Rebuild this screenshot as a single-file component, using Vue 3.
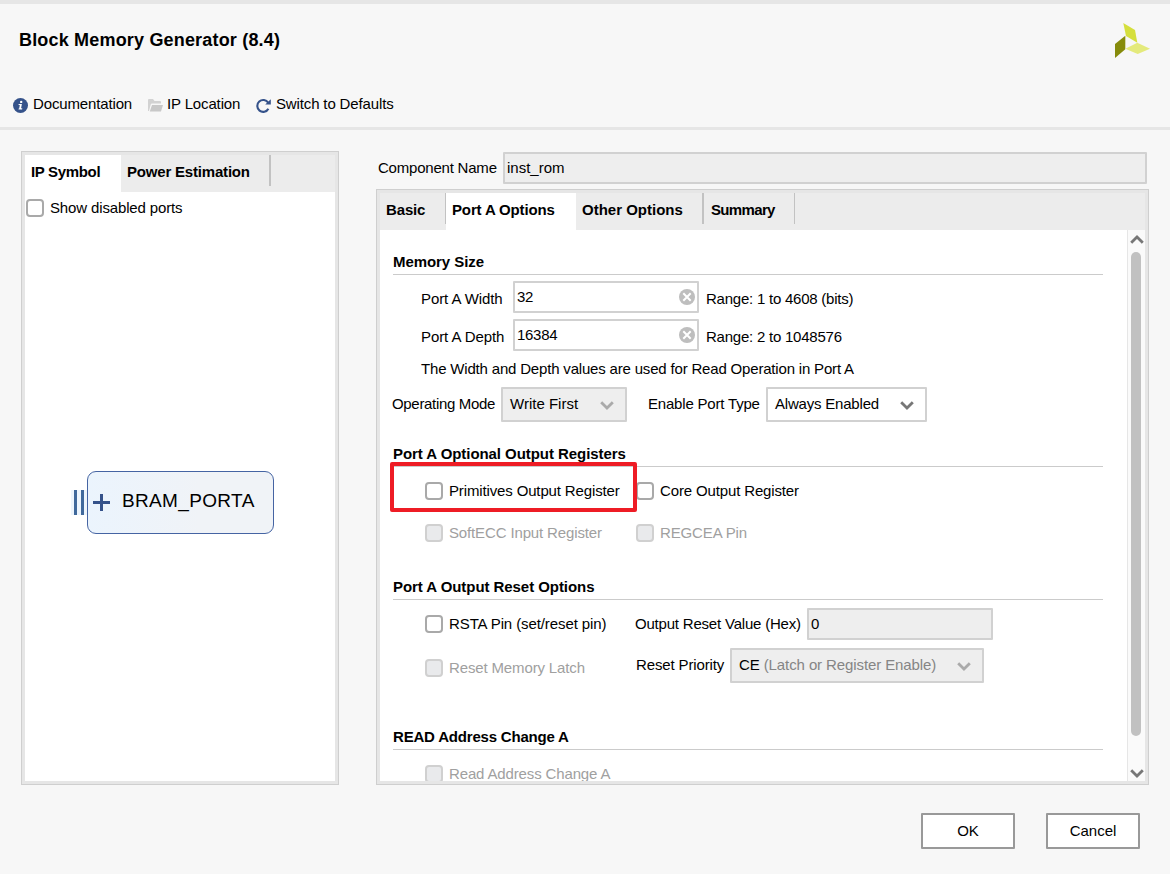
<template>
  <div class="dialog">
    <!-- Start of header -->
    <header class="header">
      <div class="title-row">
        <h1 class="title">Block Memory Generator (8.4)</h1>
        <svg class="logo" width="36" height="36" viewBox="0 0 36 36">
          <path d="M8.300 0 L20 7 L22.300 19.700 L11 13 Z" fill="#d5df3d" />
          <path d="M0 21 L10.300 12.700 L10.300 26.300 L0 35 Z" fill="#868b0b" />
          <path d="M10.300 25.700 L22.300 19.700 L35 25.700 L22.700 31 Z" fill="#e4ea7c" />
        </svg>
      </div>
      <nav class="toolbar">
        <a class="tool documentation">
          <svg width="15" height="15" viewBox="0 0 15 15">
            <circle cx="7.500" cy="7.500" r="7.500" fill="#35528a" />
            <circle cx="8.200" cy="3.900" r="1.200" fill="#fff" />
            <path d="M5.700 6 H8.900 L8.100 10.300 H9.300 L9.100 11.600 H5.500 L5.700 10.400 H6.200 L6.800 7.100 H5.500 Z" fill="#fff" />
          </svg>
          <span>Documentation</span>
        </a>
        <a class="tool location">
          <svg width="15" height="13" viewBox="0 0 15 13">
            <path d="M0 12 V1 Q0 0 1 0 H5 L6.500 2 H12 Q13 2 13 3 V4.500 H4 Q3 4.500 2.700 5.500 L1 12 Z" fill="#d2d2d2" />
            <path d="M4 6 H15 L13 12.500 H1.800 Z" fill="#c8c8c8" />
          </svg>
          <span>IP Location</span>
        </a>
        <a class="tool defaults">
          <svg width="15" height="15" viewBox="0 0 15 15">
            <path d="M12.200 4.800 A5.900 5.900 0 1 0 12.400 10.700" fill="none" stroke="#35528a" stroke-width="2.100" />
            <path d="M14.800 1.300 V6.600 H9.200 Z" fill="#35528a" />
          </svg>
          <span>Switch to Defaults</span>
        </a>
      </nav>
    </header>
    <!-- End of header -->

    <main class="main-content">
      <!-- Start of symbol panel -->
      <section class="panel symbol-panel">
        <div class="tabs">
          <button class="tab active tab-symbol">IP Symbol</button>
          <button class="tab tab-power">Power Estimation</button>
        </div>
        <div class="symbol-body">
          <label class="check show-ports">
            <input type="checkbox" v-model="showDisabled" />
            <span>Show disabled ports</span>
          </label>
          <div class="symbol">
            <span class="bus"></span>
            <div class="block">
              <svg width="17" height="17" viewBox="0 0 17 17">
                <path d="M0 8.500 H17 M8.500 0 V17" stroke="#35528a" stroke-width="3" />
              </svg>
              <span>BRAM_PORTA</span>
            </div>
          </div>
        </div>
      </section>
      <!-- End of symbol panel -->

      <!-- Start of options -->
      <section class="options">
        <div class="component-name">
          <label>Component Name</label>
          <input type="text" class="text-input disabled" v-model="componentName" readonly />
        </div>

        <div class="panel options-panel">
          <div class="tabs">
            <button v-for="tab in tabs" :key="tab.id" class="tab" :class="['tab-' + tab.id, { active: tab.id === activeTab }]"
              @click="activeTab = tab.id">{{ tab.label }}</button>
          </div>

          <div class="scroll-area">
            <div class="form">
              <!-- Memory size -->
              <h2 class="section-title first">Memory Size</h2>
              <div class="size-fields">
                <div v-for="field in sizeFields" :key="field.label" class="size-row">
                  <label class="size-label">{{ field.label }}</label>
                  <div class="clear-input">
                    <input type="text" v-model="field.value" />
                    <svg width="16" height="16" viewBox="0 0 16 16" @click="field.value = ''">
                      <circle cx="8" cy="8" r="8" fill="#bebebe" />
                      <path d="M4.300 4.300 L11.700 11.700 M11.700 4.300 L4.300 11.700" stroke="#fff" stroke-width="2" />
                    </svg>
                  </div>
                  <span class="range">{{ field.range }}</span>
                </div>
              </div>
              <p class="note">The Width and Depth values are used for Read Operation in Port A</p>
              <div class="mode-row">
                <label class="mode-label">Operating Mode</label>
                <div class="select mode-select disabled">
                  <span>Write First</span>
                  <svg class="chevron" width="14" height="9" viewBox="0 0 14 9"><path d="M1.200 1.200 L7 7 L12.800 1.200" /></svg>
                </div>
                <label class="enable-label">Enable Port Type</label>
                <div class="select enable-select">
                  <span>Always Enabled</span>
                  <svg class="chevron" width="14" height="9" viewBox="0 0 14 9"><path d="M1.200 1.200 L7 7 L12.800 1.200" /></svg>
                </div>
              </div>

              <!-- Output registers -->
              <h2 class="section-title registers-title">Port A Optional Output Registers</h2>
              <div class="registers">
                <label v-for="item in registers" :key="item.label" class="check" :class="{ disabled: item.disabled }">
                  <input type="checkbox" v-model="item.checked" :disabled="item.disabled" />
                  <span>{{ item.label }}</span>
                </label>
                <div class="highlight"></div>
              </div>

              <!-- Reset options -->
              <h2 class="section-title reset-title">Port A Output Reset Options</h2>
              <div class="reset-row">
                <label class="check reset-check">
                  <input type="checkbox" v-model="rstaPin" />
                  <span>RSTA Pin (set/reset pin)</span>
                </label>
                <label class="reset-label">Output Reset Value (Hex)</label>
                <input type="text" class="text-input disabled reset-value" v-model="resetValue" readonly />
              </div>
              <div class="reset-row priority-row">
                <label class="check reset-check disabled">
                  <input type="checkbox" disabled />
                  <span>Reset Memory Latch</span>
                </label>
                <label class="priority-label">Reset Priority</label>
                <div class="select priority-select disabled">
                  <span>CE <em>(Latch or Register Enable)</em></span>
                  <svg class="chevron" width="14" height="9" viewBox="0 0 14 9"><path d="M1.200 1.200 L7 7 L12.800 1.200" /></svg>
                </div>
              </div>

              <!-- Read address -->
              <h2 class="section-title read-title">READ Address Change A</h2>
              <label class="check read-check disabled">
                <input type="checkbox" disabled />
                <span>Read Address Change A</span>
              </label>
            </div>

            <div class="scrollbar">
              <svg class="arrow" width="14" height="9" viewBox="0 0 14 9"><path d="M1.200 7.800 L7 2 L12.800 7.800" /></svg>
              <div class="thumb"></div>
              <svg class="arrow" width="14" height="9" viewBox="0 0 14 9"><path d="M1.200 1.200 L7 7 L12.800 1.200" /></svg>
            </div>
          </div>
        </div>
      </section>
      <!-- End of options -->
    </main>

    <footer class="footer">
      <button class="dialog-button">OK</button>
      <button class="dialog-button">Cancel</button>
    </footer>
  </div>
</template>

<script setup>
import { ref } from 'vue';

const showDisabled = ref(false);
const componentName = ref('inst_rom');
const activeTab = ref('port-a');
const rstaPin = ref(false);
const resetValue = ref('0');

const tabs = [
  { id: 'basic', label: 'Basic' },
  { id: 'port-a', label: 'Port A Options' },
  { id: 'other', label: 'Other Options' },
  { id: 'summary', label: 'Summary' },
];

const sizeFields = ref([
  { label: 'Port A Width', value: '32', range: 'Range: 1 to 4608 (bits)' },
  { label: 'Port A Depth', value: '16384', range: 'Range: 2 to 1048576' },
]);

const registers = ref([
  { label: 'Primitives Output Register', checked: false, disabled: false },
  { label: 'Core Output Register', checked: false, disabled: false },
  { label: 'SoftECC Input Register', checked: false, disabled: true },
  { label: 'REGCEA Pin', checked: false, disabled: true },
]);
</script>

<style>
body {
  background-color: #f7f7f7;
}
</style>

<style scoped>
* {
  box-sizing: border-box;
}

.dialog {
  display: flex;
  flex-direction: column;
  width: 1170px;
  height: 874px;
  background-color: #f7f7f7;
  border-top: 4px solid #e6e6e6;
  font-family: "Liberation Sans", Arial, sans-serif;
  font-size: 15px;
  line-height: 18px;
  letter-spacing: -0.140px;
  color: #000;
  white-space: nowrap;
  overflow: hidden;
}

input,
button {
  font: inherit;
  color: inherit;
}

/* Header */
.header {
  height: 126px;
  border-bottom: 3px solid #e6e6e6;
}

.title-row {
  display: flex;
  justify-content: space-between;
  padding: 19px 19px 0 19px;
  height: 90px;
}

.title {
  margin: 6px 0 0;
  font-size: 18px;
  line-height: 22px;
  letter-spacing: 0.180px;
}

.toolbar {
  display: flex;
  padding-left: 13px;
}

.tool {
  display: flex;
  align-items: center;
  height: 20px;
}

.tool svg {
  margin-top: 2px;
}

.documentation {
  width: 135px;
  gap: 5px;
}

.location {
  width: 108px;
  gap: 4px;
}

.defaults {
  gap: 5px;
}

/* Panels */
.main-content {
  display: flex;
  gap: 37px;
  padding: 21px 21px 0;
  height: 655px;
}

.panel {
  display: flex;
  flex-direction: column;
  border: 1px solid #cfcfcf;
  background-color: #e6e6e6;
  padding: 3px;
}

.symbol-panel {
  width: 318px;
  height: 634px;
}

.tabs {
  display: flex;
  height: 37px;
  background-color: #ececec;
}

.tab {
  border: 0;
  background: linear-gradient(#c2c2c2, #c2c2c2) right top / 0 31px no-repeat;
  padding: 0 0 4px 6px;
  text-align: left;
  font-weight: bold;
  letter-spacing: -0.140px;
}

.tab.active {
  background-color: #fff;
}

.tab-symbol {
  width: 96px;
  letter-spacing: -0.330px;
}

.tab-power {
  width: 150px;
  background-size: 2px 31px;
  letter-spacing: -0.190px;
}

.tab-basic {
  width: 66px;
  background-size: 1px 31px;
}

.tab-port-a {
  width: 130px;
}

.tab-other {
  width: 128px;
  background-size: 2px 31px;
  letter-spacing: 0;
}

.tab-summary {
  width: 91px;
  padding-left: 7px;
  background-size: 1px 31px;
  letter-spacing: -0.650px;
}

.symbol-body {
  flex: 1;
  background-color: #fff;
  padding: 7px 0 0 1px;
}

.check {
  display: flex;
  align-items: center;
  gap: 6px;
  height: 18px;
}

.check input {
  appearance: none;
  width: 18px;
  height: 18px;
  margin: 0;
  border: 2px solid #a9a9a9;
  border-radius: 4px;
  background-color: #fff;
}

.check.disabled {
  color: #a0a0a0;
}

.check.disabled input {
  border-color: #d0d0d0;
  background-color: #e9eaec;
}

.symbol {
  display: flex;
  align-items: center;
  margin: 254px 0 0 45px;
}

.bus {
  width: 16px;
  height: 25px;
  margin-bottom: 1px;
  background: linear-gradient(90deg, #edf5fd 3px, #40699c 3px 6px, #edf5fd 6px 10px, #40699c 10px 13px, #edf5fd 13px);
}

.block {
  display: flex;
  align-items: center;
  gap: 12px;
  width: 187px;
  height: 63px;
  padding: 0 0 4px 5px;
  border: 1px solid #4564a3;
  border-radius: 9px;
  background: linear-gradient(90deg, #ebf4fd, #f0f3f7 60%);
  font-size: 19px;
  letter-spacing: 0.350px;
}

.block svg {
  margin-top: 3px;
}

/* Options */
.options {
  width: 773px;
}

.component-name {
  display: flex;
  align-items: center;
  height: 32px;
  margin: 1px 0 5px;
  padding-left: 2px;
}

.component-name label {
  width: 125px;
  letter-spacing: -0.210px;
}

.component-name .text-input {
  width: 644px;
}

.text-input {
  height: 32px;
  padding: 0 2px 1px;
  border: 2px solid #d1d1d1;
  border-radius: 1px;
  background-color: #fff;
  outline: 0;
}

.text-input.disabled {
  background-color: #eee;
}

.options-panel {
  width: 773px;
  height: 596px;
}

.scroll-area {
  display: flex;
  flex: 1;
  min-height: 0;
  background-color: #fff;
}

.form {
  width: 747px;
  padding: 0 24px 0 13px;
  overflow: hidden;
}

.section-title {
  margin: 0;
  border-bottom: 1px solid #cbcbcb;
  font-size: 15px;
  line-height: 24px;
  letter-spacing: -0.060px;
}

.first {
  padding-top: 20px;
}

.size-fields {
  display: flex;
  flex-direction: column;
  gap: 6px;
  margin: 6px 0 0 28px;
}

.size-row {
  display: flex;
}

.size-label {
  width: 92px;
  padding-top: 9px;
  letter-spacing: -0.080px;
}

.clear-input {
  display: flex;
  align-items: center;
  width: 186px;
  height: 32px;
  padding-right: 2px;
  border: 2px solid #d1d1d1;
  border-radius: 1px;
}

.clear-input input {
  width: 164px;
  border: 0;
  padding: 0 2px;
  outline: 0;
  letter-spacing: -0.300px;
}

.range {
  padding: 9px 0 0 7px;
  letter-spacing: -0.230px;
}

.note {
  margin: 0 0 0 28px;
  line-height: 36px;
  letter-spacing: -0.180px;
}

.mode-row {
  display: flex;
  height: 35px;
  line-height: 34px;
}

.mode-label {
  width: 109px;
  margin-left: -1px;
  letter-spacing: -0.320px;
}

.enable-label {
  width: 118px;
  margin-left: 21px;
  letter-spacing: -0.190px;
}

.select {
  display: flex;
  justify-content: space-between;
  height: 35px;
  padding: 0 11px 0 7px;
  border: 2px solid #d1d1d1;
  border-radius: 1px;
  background-color: #fff;
  line-height: 30px;
}

.select.disabled {
  background-color: #eee;
}

.select em {
  font-style: normal;
  color: #858585;
}

.chevron {
  margin-top: 12px;
  fill: none;
  stroke: #777;
  stroke-width: 2.800;
}

.disabled .chevron {
  stroke: #aaa;
}

.mode-select {
  width: 126px;
  letter-spacing: 0;
}

.enable-select {
  width: 161px;
  letter-spacing: -0.200px;
}

.registers-title {
  margin-top: 20px;
}

.registers {
  position: relative;
  display: grid;
  grid-template-columns: 211px 211px;
  row-gap: 24px;
  margin: 15px 0 0 32px;
}

.highlight {
  position: absolute;
  left: -35px;
  top: -20px;
  width: 247px;
  height: 50px;
  border: 4px solid #ee1c25;
  border-radius: 2px;
}

.reset-title {
  margin-top: 33px;
}

.reset-row {
  display: flex;
  height: 32px;
  margin: 8px 0 0 32px;
  line-height: 32px;
}

.reset-check {
  width: 210px;
  margin-top: 7px;
  letter-spacing: -0.100px;
}

.reset-label {
  width: 172px;
  letter-spacing: -0.200px;
}

.reset-value {
  width: 186px;
}

.priority-row {
  height: 35px;
  line-height: 34px;
}

.priority-row .reset-check {
  width: 211px;
  margin-top: 11px;
  letter-spacing: -0.140px;
}

.priority-label {
  width: 94px;
}

.priority-select {
  width: 254px;
  letter-spacing: -0.100px;
}

.read-title {
  margin-top: 42px;
  letter-spacing: -0.190px;
}

.read-check {
  margin: 15px 0 0 32px;
}

.scrollbar {
  display: flex;
  flex-direction: column;
  align-items: center;
  width: 18px;
  padding: 5px 0 3px 1px;
  border-left: 1px solid #e6e6e6;
  background-color: #fafafa;
}

.arrow {
  fill: none;
  stroke: #777;
  stroke-width: 2.800;
}

.thumb {
  width: 10px;
  height: 485px;
  margin: 8px 2px 33px 0;
  border-radius: 5px;
  background-color: #c1c1c1;
}

/* Footer */
.footer {
  display: flex;
  justify-content: flex-end;
  gap: 31px;
  padding: 28px 30px 0 0;
}

.dialog-button {
  width: 94px;
  height: 36px;
  padding: 0;
  border: 2px solid #999;
  border-radius: 1px;
  background-color: #fff;
}
</style>
